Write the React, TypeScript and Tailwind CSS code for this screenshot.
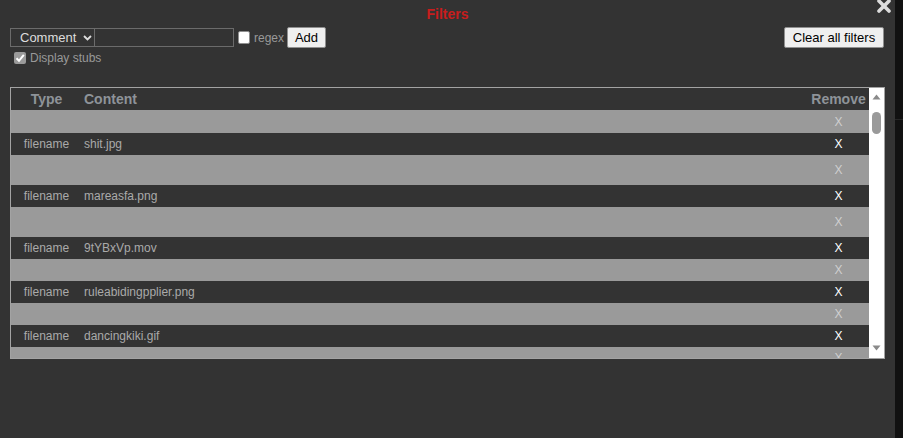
import React from "react";

type Row = { stub: boolean; h: number; content?: string };

const rows: Row[] = [
  { stub: true, h: 23 },
  { stub: false, h: 22, content: "shit.jpg" },
  { stub: true, h: 30 },
  { stub: false, h: 22, content: "mareasfa.png" },
  { stub: true, h: 30 },
  { stub: false, h: 22, content: "9tYBxVp.mov" },
  { stub: true, h: 22 },
  { stub: false, h: 22, content: "ruleabidingpplier.png" },
  { stub: true, h: 22 },
  { stub: false, h: 22, content: "dancingkiki.gif" },
  { stub: true, h: 22 },
];

function CloseIcon() {
  return (
    <svg width="16" height="16" viewBox="0 0 16 16" className="block">
      <path d="M3 2 L13 12 M13 2 L3 12" stroke="#dcdcdc" strokeWidth="3.6" strokeLinecap="round" />
    </svg>
  );
}

function FilterRow({ row }: { row: Row }) {
  return (
    <div
      className={`flex items-center text-[12px] ${row.stub ? "bg-[#9a9a9a]" : "bg-[#333333]"}`}
      style={{ height: row.h }}
    >
      <div className="w-[71px] text-center text-[#aaaaaa]">{row.stub ? "" : "filename"}</div>
      <div className="flex-1 pl-[2px] text-[#aaaaaa]">{row.content}</div>
      <div className={`w-[61px] text-center ${row.stub ? "text-[#cfcfcf]" : "text-white"}`}>X</div>
    </div>
  );
}

function Scrollbar() {
  return (
    <div className="w-[15px] bg-white flex flex-col items-center">
      <svg width="9" height="6" viewBox="0 0 9 6" className="mt-[6px]">
        <path d="M0.5 5.5 L4.5 0.5 L8.5 5.5 Z" fill="#8a8a8a" />
      </svg>
      <div className="mt-[12px] w-[9px] h-[22px] rounded-full bg-[#9a9a9a]" />
      <div className="flex-1" />
      <svg width="9" height="6" viewBox="0 0 9 6" className="mb-[7px]">
        <path d="M0.5 0.5 L4.5 5.5 L8.5 0.5 Z" fill="#8a8a8a" />
      </svg>
    </div>
  );
}

export default function App() {
  return (
    <div
      className="flex w-[903px] h-[438px] overflow-hidden"
      style={{ fontFamily: '"Liberation Sans", Arial, sans-serif' }}
    >
      <div className="w-[895px] h-full bg-[#333333] relative">
        <div className="absolute right-[3px] top-[-1px]">
          <CloseIcon />
        </div>

        <div className="h-[27px] flex items-center justify-center pt-[1px] text-[14px] font-bold text-[#c81d1d]">
          Filters
        </div>

        <div className="flex items-center px-[10px] h-[21px]">
          <div className="relative flex">
            <select
              defaultValue="Comment"
              className="block appearance-none h-[19px] w-[85px] border border-[#6b6b6b] bg-[#333333] text-[13px] text-[#dddddd] pl-[9px] leading-none outline-none"
            >
              <option>Comment</option>
            </select>
            <svg
              width="9"
              height="6"
              viewBox="0 0 9 6"
              className="absolute right-[3px] top-[7px] pointer-events-none"
            >
              <path d="M1 1 L4.5 4.5 L8 1" stroke="#dddddd" strokeWidth="1.8" fill="none" />
            </svg>
          </div>
          <input
            className="block h-[19px] w-[139px] border border-[#6b6b6b] border-l-0 bg-[#333333] text-[13px] text-[#dddddd] outline-none px-1"
          />
          <span className="ml-[4px] w-[12px] h-[13px] rounded-[2px] bg-white border border-[#8f8f8f]" />
          <span className="ml-[4px] text-[12px] text-[#999999] leading-none">regex</span>
          <button className="ml-[3px] h-[21px] w-[39px] rounded-[2px] border border-[#8f8f8f] bg-[#efefef] text-[13px] text-black leading-none">
            Add
          </button>
          <div className="flex-1" />
          <button className="mr-[1px] h-[21px] w-[100px] rounded-[2px] border border-[#8f8f8f] bg-[#efefef] text-[13px] text-black leading-none">
            Clear all filters
          </button>
        </div>

        <div className="flex items-center pl-[14px] mt-[3px] h-[14px]">
          <span className="w-[12px] h-[12px] rounded-[2px] bg-[#9a9a9a] flex items-center justify-center">
            <svg width="10" height="10" viewBox="0 0 10 10">
              <path d="M1.5 5.2 L4 7.8 L8.8 1.8" stroke="white" strokeWidth="2" fill="none" />
            </svg>
          </span>
          <span className="ml-[4px] text-[12px] text-[#999999] leading-none">Display stubs</span>
        </div>

        <div className="mt-[22px] ml-[10px] w-[875px] h-[272px] border border-[#a3a3a3] flex overflow-hidden">
          <div className="flex-1 flex flex-col overflow-hidden">
            <div className="h-[22px] flex items-center text-[14px] font-bold text-[#8e9399] shrink-0">
              <div className="w-[71px] text-center">Type</div>
              <div className="flex-1 pl-[2px]">Content</div>
              <div className="w-[61px] text-center">Remove</div>
            </div>
            {rows.map((r, i) => (
              <div key={i} className="shrink-0">
                <FilterRow row={r} />
              </div>
            ))}
          </div>
          <Scrollbar />
        </div>
      </div>
      <div className="w-[8px] h-full bg-[#111111] flex flex-col">
        <div className="h-[119px]" />
        <div className="h-[1px] bg-[#262626]" />
      </div>
    </div>
  );
}
